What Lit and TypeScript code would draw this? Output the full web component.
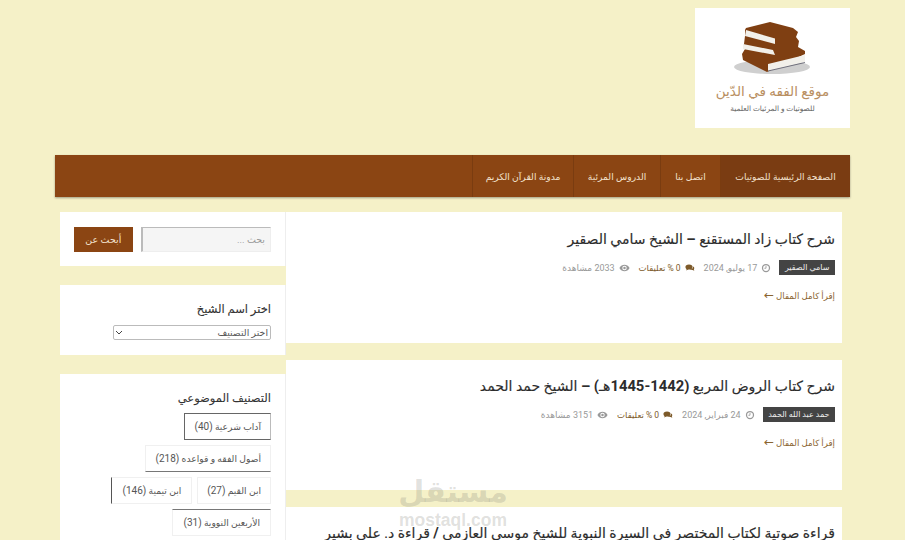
import { LitElement, html, css, svg } from "lit";
import { customElement } from "lit/decorators.js";

const clock = svg`<svg class="ic" viewBox="0 0 12 12"><circle cx="6" cy="6" r="4.2" fill="none" stroke="currentColor" stroke-width="1.5"/><path d="M6 3.5V6.3H4" fill="none" stroke="currentColor" stroke-width="1"/></svg>`;
const chat = svg`<svg class="ic" viewBox="0 0 14 12"><ellipse cx="5.6" cy="4.6" rx="5" ry="3.6" fill="currentColor"/><path d="M2.6 7 1.6 9.6 5 7.6Z" fill="currentColor"/><path d="M11.4 3.8C13 4.6 13.6 6.4 12.4 7.8L13 10 10.6 8.8C9 9.2 7.4 8.8 6.6 8.2 9.2 8.2 11.6 6.4 11.4 3.8Z" fill="currentColor"/></svg>`;
const eye = svg`<svg class="ic eye" viewBox="0 0 14 10"><path fill-rule="evenodd" d="M.5 5C2 2.2 4.4.8 7 .8S12 2.2 13.5 5C12 7.8 9.6 9.2 7 9.2S2 7.8.5 5ZM7 2.2A2.8 2.8 0 1 0 7 7.8 2.8 2.8 0 0 0 7 2.2Z" fill="currentColor"/><circle cx="7" cy="5" r="1.6" fill="currentColor"/></svg>`;

const posts = [
  { title: html`شرح كتاب زاد المستقنع <b>–</b> الشيخ سامي الصقير`, tag: "سامي الصقير", date: "17 يوليو, 2024", views: "2033 مشاهدة", h: 131, pad: 17 },
  { title: html`شرح كتاب الروض المربع <b>(1442-1445</b>هـ<b>)</b> <b>–</b> الشيخ حمد الحمد`, tag: "حمد عبد الله الحمد", date: "24 فبراير, 2024", views: "3151 مشاهدة", h: 130, pad: 16 },
  { title: html`قراءة صوتية لكتاب المختصر في السيرة النبوية للشيخ موسى العازمي <b>/</b> قراءة د. علي بشير`, tag: "", date: "", views: "", h: 120, pad: 16 },
];

const cats = [
  [{ t: "آداب شرعية", n: "(40)", c: "k" }],
  [{ t: "أصول الفقه و قواعده", n: "(218)", c: "b" }],
  [{ t: "ابن القيم", n: "(27)", c: "" }, { t: "ابن تيمية", n: "(146)", c: "l" }],
  [{ t: "الأربعين النووية", n: "(31)", c: "u" }],
];

@customElement("app-root")
export class AppRoot extends LitElement {
  static styles = css`
    :host { display: block; width: 905px; height: 540px; overflow: hidden; position: relative; background: #f5f1c8; font-family: Roboto, "DejaVu Sans", sans-serif; color: #333; }
    .page { direction: rtl; padding: 8px 55px 0; width: 795px; }
    .hd { display: flex; height: 147px; }
    .logo { width: 155px; height: 120px; background: #fff; display: flex; flex-direction: column; align-items: center; overflow: hidden; }
    .logo svg { width: 100px; height: 70px; margin: 4px 0 0 5px; flex: none; }
    .l1 { font-size: 13.5px; line-height: 16px; color: #b98f62; margin-top: 1px; white-space: nowrap; }
    .l2 { font-size: 7.4px; line-height: 12px; color: #666; margin-top: 4px; white-space: nowrap; }
    nav { display: flex; height: 42px; background: #8b4513; box-shadow: 0 1px 2px rgba(0,0,0,.35); }
    nav a { display: flex; align-items: center; justify-content: center; box-sizing: border-box; font-size: 9.2px; color: #f3e3cf; border-left: 1px solid #7a3c10; white-space: nowrap; }
    nav a:nth-child(1) { width: 130px; background: #7a3c12; }
    nav a:nth-child(2) { width: 60px; }
    nav a:nth-child(3) { width: 87px; }
    nav a:nth-child(4) { width: 101px; }
    .cols { display: flex; margin-top: 15px; align-items: flex-start; }
    main { width: 556px; margin-right: 8px; flex: none; display: flex; flex-direction: column; gap: 17px; }
    .post { background: #fff; padding-right: 7px; box-sizing: border-box; }
    .post h2 { margin: 0; font-size: 14px; line-height: 20px; font-weight: 400; color: #2c2c2c; white-space: nowrap; -webkit-text-stroke: .15px #2c2c2c; }
    .post h2 b { font-weight: 700; font-size: 14.8px; -webkit-text-stroke: 0; }
    .meta { display: flex; align-items: center; margin-top: 11px; height: 15px; font-size: 9px; color: #999; }
    .tag { background: #444; color: #eee; height: 15px; line-height: 15px; padding: 0 5.5px; font-size: 8px; margin-left: 8px; }
    .m { display: flex; align-items: center; gap: 4px; margin-left: 9px; }
    .m.c { color: #7d5a2a; font-size: 8.5px; }
    .ic { width: 10px; height: 10px; flex: none; }
    .ic.eye { width: 11px; }
    .more { margin-top: 13px; font-size: 8.6px; line-height: 16px; color: #8a6430; }
    .more span { font-family: "DejaVu Sans", sans-serif; font-size: 12px; line-height: 12px; }
    aside { width: 226px; flex: none; display: flex; flex-direction: column; gap: 19px; }
    .w { background: #fff; padding: 15px 14px; box-sizing: border-box; border-right: 1px solid #eee; }
    .w.s { height: 54px; display: flex; gap: 8px; }
    .inp { width: 131px; height: 25px; box-sizing: border-box; background: #f5f5f5; border: 1px solid #eee; border-top-color: #bbb; border-left: 2px solid #bbb; font-size: 9.5px; color: #999; line-height: 23px; padding-right: 5px; }
    .btn { width: 59px; height: 25px; background: #8b4513; color: #f3e3cf; font-size: 9.5px; line-height: 25px; text-align: center; }
    .w h3 { margin: 0; font-size: 11.5px; line-height: 16px; font-weight: 400; color: #333; -webkit-text-stroke: .1px #333; }
    .w.d { height: 70px; padding-top: 16px; }
    .sel { width: 158px; height: 15px; box-sizing: border-box; margin-top: 8px; border: 1px solid #bbb; border-radius: 2px; font-size: 9.4px; line-height: 13px; color: #555; display: flex; justify-content: space-between; padding: 0 2px 0 1px; }
    .sel svg { width: 8px; height: 13px; }
    .w.t { height: 180px; padding-top: 16px; }
    .tags { margin-top: 7px; display: flex; flex-direction: column; gap: 5px; }
    .row { display: flex; gap: 5px; }
    .tags a { height: 27px; line-height: 25px; box-sizing: border-box; padding: 0 9px; font-size: 9.2px; color: #555; border: 1px solid #f0f0f0; white-space: nowrap; }
    .tags a span { font-size: 10px; }
    .tags a.k { border-color: #666; border-right-color: #bbb; }
    .tags a.b { border-bottom-color: #777; }
    .tags a.l { border-left-color: #555; padding: 0 10px; }
    .tags a.u { border-top-color: #777; padding: 0 10px; }
    .wm { position: absolute; left: 398px; top: 473px; width: 110px; text-align: center; color: rgba(125,125,115,.24); direction: ltr; pointer-events: none; }
    .wm b { display: block; font-size: 30px; line-height: 38px; font-weight: 700; font-family: "DejaVu Sans", sans-serif; }
    .wm span { display: block; font-family: "Liberation Sans", sans-serif; font-weight: 700; font-size: 17.5px; line-height: 15px; margin-top: 2px; }
  `;

  render() {
    return html`
      <div class="page">
        <header class="hd">
          <div class="logo">
            <svg viewBox="0 0 100 70">
              <ellipse cx="47" cy="55" rx="38" ry="7" fill="#cfcfcf"/>
              <path d="M21 16 45 10 68 16 73 20 71 25 74 29 73 35 80 39 80 42 42 60 18 48 17 42 20 37 19 32 20 24 20 18Z" fill="#7f3f12"/>
              <path d="M21 18 50 26.500V32L20 24Z" fill="#f2f0ea"/>
              <path d="M18 32 48 38 50 43 18 37Z" fill="#f2f0ea"/>
              <path d="M43 52 80 43V50L43 59Z" fill="#f2f0ea"/>
              <path d="M43 59 80 50.500" stroke="#556" stroke-width=".8" fill="none"/>
            </svg>
            <div class="l1">موقع الفقه في الدّين</div>
            <div class="l2">للصوتيات و المرئيات العلمية</div>
          </div>
        </header>
        <nav>
          <a>الصفحة الرئيسية للصوتيات</a>
          <a>اتصل بنا</a>
          <a>الدروس المرئية</a>
          <a>مدونة القرآن الكريم</a>
        </nav>
        <div class="cols">
          <main>
            ${posts.map((p) => html`
              <article class="post" style="height:${p.h}px;padding-top:${p.pad}px">
                <h2>${p.title}</h2>
                ${p.tag ? html`
                  <div class="meta">
                    <span class="tag">${p.tag}</span>
                    <span class="m">${clock}${p.date}</span>
                    <span class="m c">${chat}0 % تعليقات</span>
                    <span class="m">${eye}${p.views}</span>
                  </div>
                  <div class="more">إقرأ كامل المقال <span>←</span></div>
                ` : ""}
              </article>`)}
          </main>
          <aside>
            <div class="w s">
              <div class="inp">بحث ...</div>
              <div class="btn">أبحث عن</div>
            </div>
            <div class="w d">
              <h3>اختر اسم الشيخ</h3>
              <div class="sel"><span>اختر التصنيف</span>
                <svg viewBox="0 0 8 13"><path d="M1 5 4 8 7 5" fill="none" stroke="#444" stroke-width="1"/></svg>
              </div>
            </div>
            <div class="w t">
              <h3>التصنيف الموضوعي</h3>
              <div class="tags">
                ${cats.map((r) => html`<div class="row">${r.map((c) => html`<a class=${c.c}>${c.t} <span>${c.n}</span></a>`)}</div>`)}
              </div>
            </div>
          </aside>
        </div>
      </div>
      <div class="wm"><b>مستقل</b><span>mostaql.com</span></div>
    `;
  }
}
